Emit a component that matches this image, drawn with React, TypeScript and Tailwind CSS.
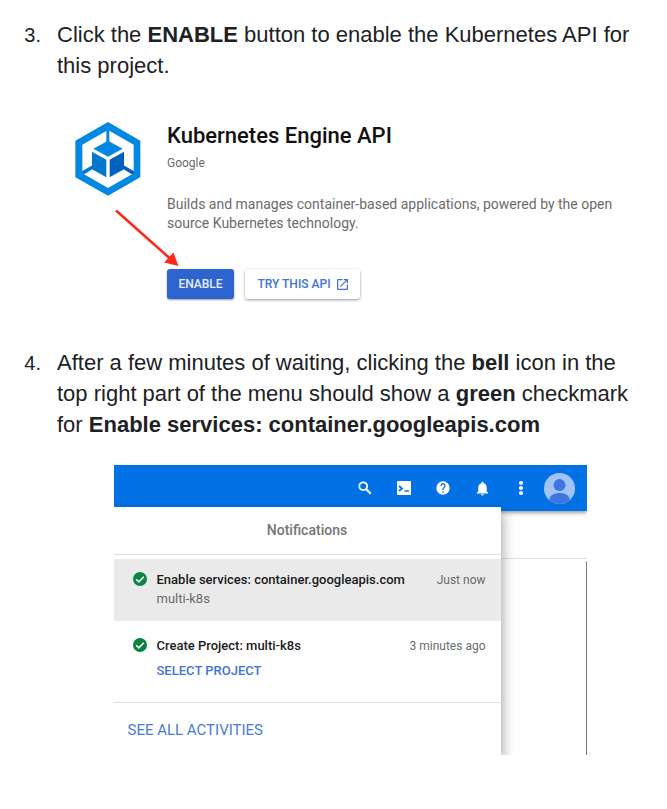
import type { ReactNode } from "react";

function Step({ number, children }: { number: number; children: ReactNode }) {
  return (
    <li className="grid grid-cols-[41px_minmax(0,1fr)] gap-x-4">
      <span className="text-right text-[20px] leading-[32px]">{number}.</span>
      <div>{children}</div>
    </li>
  );
}

function KubernetesLogo() {
  return (
    <svg className="w-[66px] h-[74px]" viewBox="46 36 196 222" aria-hidden="true">
      <path
        fill="#0288e2"
        fillRule="evenodd"
        d="M144 36 241 92V202L144 257 46 202V92ZM144 60 67 104V190L144 234 221 190V104Z"
      />
      <path fill="#0288e2" d="M139 58h9v38h-9z" />
      <path fill="#0277d0" d="M97 166V178L74 192 66 191V184Z" />
      <path fill="#0161c0" d="M191 166V178L214 192 222 191V184Z" />
      <path fill="#0288e2" d="M144 92 188 116 144 140 100 116Z" />
      <path fill="#0277d0" d="M96 125 139 149V202L96 178Z" />
      <path fill="#0161c0" d="M192 125 149 149V202L192 178Z" />
    </svg>
  );
}

function Check() {
  return (
    <svg className="size-[14px] shrink-0" viewBox="0 0 20 20" aria-hidden="true">
      <circle cx="10" cy="10" r="10" fill="#0a8440" />
      <path d="M4.500 10.300 8.300 14 15.500 6.800" fill="none" stroke="#fff" strokeWidth="2.200" />
    </svg>
  );
}

function ApiCard() {
  return (
    <section className="relative mt-[41px] ml-[18px] flex gap-[26px] font-[Roboto,sans-serif]">
      <div className="shrink-0">
        <KubernetesLogo />
      </div>
      <svg className="absolute left-[39px] top-[86px] h-[62px] w-[66px]" viewBox="0 0 66 62" aria-hidden="true">
        <path d="M2 2.500 56 50.500" stroke="#fb2a1c" strokeWidth="2.600" />
        <path d="M64.500 58 50 54.500 59.500 44.500Z" fill="#fb2a1c" />
      </svg>
      <div className="min-w-0">
        <h2 className="text-[22px] leading-[28px] font-medium text-[#111]">Kubernetes Engine API</h2>
        <p className="mt-[5px] text-[12px] leading-[16px] text-[#6b6b6b]">Google</p>
        <p className="mt-[24px] max-w-[460px] text-[14px] leading-[19px] text-[#6b6b6b]">
          Builds and manages container-based applications, powered by the open source Kubernetes technology.
        </p>
        <div className="mt-[36px] flex gap-[11px] text-[12px] font-medium">
          <button className="h-[30px] w-[67px] rounded-[3px] bg-[#2d64d0] text-[#e7eefb] shadow-[0_1px_2px_#0006]">
            ENABLE
          </button>
          <button className="flex h-[30px] w-[115px] items-center justify-center gap-[6px] rounded-[3px] bg-white text-[#4272d4] shadow-[0_1px_3px_#0006]">
            TRY THIS API
            <svg className="size-[11px]" viewBox="3 3 18 18" fill="currentColor" aria-hidden="true">
              <path d="M19 19H5V5h7V3H5a2 2 0 0 0-2 2v14a2 2 0 0 0 2 2h14a2 2 0 0 0 2-2v-7h-2v7ZM14 3v2h3.590l-9.830 9.830 1.410 1.410L19 6.410V10h2V3h-7Z" />
            </svg>
          </button>
        </div>
      </div>
    </section>
  );
}

const iconButton = "flex w-[39px] items-center justify-center";

function TopBar() {
  return (
    <header className="flex h-[46px] items-center justify-end bg-[#0271e5] pr-[12px] text-white shadow-[0_1px_5px_#0008]">
      <button className={iconButton} aria-label="Search">
        <svg className="size-[14px]" viewBox="0 0 14 14" fill="none" stroke="currentColor">
          <circle cx="5.200" cy="5.200" r="3.900" strokeWidth="1.800" />
          <path d="M8 8 12.700 12.700" strokeWidth="2.300" />
        </svg>
      </button>
      <button className={iconButton} aria-label="Cloud Shell">
        <svg className="size-[14px]" viewBox="0 0 14 14">
          <rect width="14" height="14" rx="1" fill="currentColor" />
          <path d="M2 5 5 7.500 2 10M7.500 10H12" fill="none" stroke="#0271e5" strokeWidth="1.700" />
        </svg>
      </button>
      <button className={iconButton} aria-label="Help">
        <svg className="size-[16px]" viewBox="0 0 24 24" fill="currentColor">
          <path d="M12 2a10 10 0 1 0 0 20 10 10 0 0 0 0-20Zm1 17h-2v-2h2v2Zm2.070-7.750-.900.920C13.450 12.900 13 13.500 13 15h-2v-.500c0-1.100.450-2.100 1.170-2.830l1.240-1.260A2 2 0 1 0 10 9H8a4 4 0 1 1 7.070 2.250Z" />
        </svg>
      </button>
      <button className={iconButton} aria-label="Notifications">
        <svg className="size-[17px]" viewBox="0 0 24 24" fill="currentColor">
          <path d="M12 22a2 2 0 0 0 2-2h-4a2 2 0 0 0 2 2Zm6-6v-5c0-3.070-1.640-5.640-4.500-6.320V4a1.500 1.500 0 0 0-3 0v.680C7.630 5.360 6 7.920 6 11v5l-2 2v1h16v-1l-2-2Z" />
        </svg>
      </button>
      <button className={iconButton} aria-label="More options">
        <svg className="h-[14px] w-[4px]" viewBox="0 0 4 14" fill="currentColor">
          <circle cx="2" cy="2" r="2" />
          <circle cx="2" cy="7" r="2" />
          <circle cx="2" cy="12" r="2" />
        </svg>
      </button>
      <button className="ml-[3px]" aria-label="Account">
        <svg className="size-[31px]" viewBox="0 0 31 31">
          <defs>
            <clipPath id="avatar">
              <circle cx="15.500" cy="15.500" r="15.500" />
            </clipPath>
          </defs>
          <g clipPath="url(#avatar)">
            <path fill="#a0c3fa" d="M0 0h31v31H0z" />
            <circle cx="15.500" cy="12" r="6" fill="#3f75df" />
            <path d="M5.500 31v-5c0-4 6-6 10-6s10 2 10 6v5Z" fill="#3f75df" />
          </g>
        </svg>
      </button>
    </header>
  );
}

function Notifications() {
  return (
    <section className="absolute top-[42px] bottom-0 left-0 w-[387px] bg-white shadow-[2px_6px_12px_#0005]">
      <h3 className="flex h-[48px] items-center justify-center border-b border-[#e0e0e0] text-[14px] font-medium text-[#757575]">
        Notifications
      </h3>
      <ul className="pt-1 text-[13px] leading-[16px]">
        <li className="flex h-[62px] gap-[10px] bg-[#eaeaea] pt-[13px] pr-[15px] pl-[19px]">
          <Check />
          <div className="flex-1">
            <p className="font-medium text-[#1b1b1b]">Enable services: container.googleapis.com</p>
            <p className="mt-[3px] text-[#6b6b6b]">multi-k8s</p>
          </div>
          <time className="text-[12px] text-[#6b6b6b]">Just now</time>
        </li>
        <li className="flex h-[81px] gap-[10px] pt-[17px] pr-[15px] pl-[19px]">
          <Check />
          <div className="flex-1">
            <p className="font-medium text-[#1b1b1b]">Create Project: multi-k8s</p>
            <a href="#project" className="mt-[9px] block font-medium text-[#4074d6]">
              SELECT PROJECT
            </a>
          </div>
          <time className="text-[12px] text-[#6b6b6b]">3 minutes ago</time>
        </li>
      </ul>
      <div className="border-t border-[#e0e0e0] px-[14px] pt-[17px]">
        <a href="#activities" className="block text-[15px] leading-[20px] text-[#4b7bd6]">
          SEE ALL ACTIVITIES
        </a>
      </div>
    </section>
  );
}

function Console() {
  return (
    <div className="relative mx-auto mt-[25px] flex h-[290px] max-w-[473px] flex-col overflow-hidden bg-white font-[Roboto,sans-serif]">
      <TopBar />
      <div className="mt-[47px] flex-1 border-t border-[#e0e0e0] pt-[2px]">
        <div className="h-full rounded-tr-[2px] border-r border-[#777]" />
      </div>
      <Notifications />
    </div>
  );
}

export default function App() {
  return (
    <main className="bg-white pt-[19px] pr-6 pb-[54px] font-['Liberation_Sans',Arial,sans-serif] text-[#202124]">
      <ol className="flex flex-col gap-[48px]">
        <Step number={3}>
          <p className="text-[22px] leading-[31px]">
            Click the <b>ENABLE</b> button to enable the Kubernetes API for this project.
          </p>
          <ApiCard />
        </Step>
        <Step number={4}>
          <p className="text-[22px] leading-[31px]">
            After a few minutes of waiting, clicking the <b>bell</b> icon in the top right part of the menu should show
            a <b>green</b> checkmark for <b>Enable services: container.googleapis.com</b>
          </p>
          <Console />
        </Step>
      </ol>
    </main>
  );
}
